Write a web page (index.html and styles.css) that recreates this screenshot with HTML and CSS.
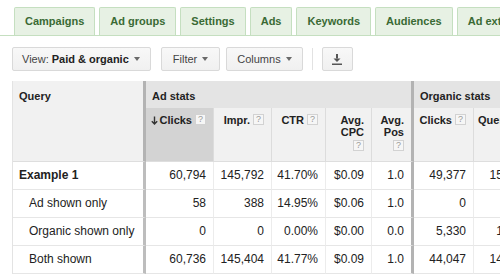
FILE: index.html
```html
<!DOCTYPE html>
<html>
<head>
<meta charset="utf-8">
<link rel="stylesheet" href="styles.css">
</head>
<body>
<div class="tabs">
  <div class="tab">Campaigns</div>
  <div class="tab">Ad groups</div>
  <div class="tab">Settings</div>
  <div class="tab">Ads</div>
  <div class="tab">Keywords</div>
  <div class="tab">Audiences</div>
  <div class="tab">Ad extensions</div>
</div>
<div class="toolbar">
  <div class="btn btn-view">View: <b>Paid &amp; organic</b><span class="caret"></span></div>
  <div class="btn btn-filter">Filter<span class="caret"></span></div>
  <div class="btn">Columns<span class="caret"></span></div>
  <div class="sep"></div>
  <div class="btn btn-dl"><svg width="10" height="11" viewBox="0 0 10 11"><rect x="4" y="0" width="2" height="4.5" fill="#555"/><polygon points="1.5,4.5 8.5,4.5 5,8" fill="#555"/><rect x="0" y="9.5" width="10" height="1.5" fill="#555"/></svg></div>
</div>
<div class="grid">
  <div class="hq">Query</div>
  <div class="hgroup">Ad stats</div>
  <div class="hgroup hgroup-org">Organic stats</div>

  <div class="hs sorted"><svg class="arrow" width="7" height="9" viewBox="0 0 7 9"><path d="M3.5 0.5V8M0.8 5.2L3.5 8L6.2 5.2" fill="none" stroke="#333" stroke-width="1.4"/></svg>Clicks<span class="help">?</span></div>
  <div class="hs">Impr.<span class="help">?</span></div>
  <div class="hs">CTR<span class="help">?</span></div>
  <div class="hs"><div>Avg.</div><div>CPC</div><div><span class="help">?</span></div></div>
  <div class="hs divr"><div>Avg.</div><div>Pos</div><div><span class="help">?</span></div></div>
  <div class="hs">Clicks<span class="help">?</span></div>
  <div class="hs">Queries<span class="help">?</span></div>

  <div class="q q-main">Example 1</div>
  <div class="c">60,794</div><div class="c">145,792</div><div class="c">41.70%</div><div class="c">$0.09</div><div class="c divr">1.0</div><div class="c">49,377</div><div class="c">151,230</div>

  <div class="q q-sub">Ad shown only</div>
  <div class="c">58</div><div class="c">388</div><div class="c">14.95%</div><div class="c">$0.06</div><div class="c divr">1.0</div><div class="c">0</div><div class="c">0</div>

  <div class="q q-sub">Organic shown only</div>
  <div class="c">0</div><div class="c">0</div><div class="c">0.00%</div><div class="c">$0.00</div><div class="c divr">0.0</div><div class="c">5,330</div><div class="c">16,288</div>

  <div class="q q-sub">Both shown</div>
  <div class="c">60,736</div><div class="c">145,404</div><div class="c">41.77%</div><div class="c">$0.09</div><div class="c divr">1.0</div><div class="c">44,047</div><div class="c">144,942</div>
</div>
</body>
</html>
```
FILE: styles.css
```css
html, body {
  margin: 0;
  padding: 0;
  overflow: hidden;
  background: #fff;
  font-family: "Liberation Sans", Arial, sans-serif;
  color: #222;
}

.tabs {
  display: flex;
  gap: 4px;
  padding: 7px 0 0 14px;
  border-bottom: 1px solid #c5dfc0;
  white-space: nowrap;
  overflow: hidden;
}

.tab {
  flex: none;
  height: 27px;
  line-height: 27px;
  padding: 0 10px;
  border: 1px solid #c5dfc0;
  border-bottom: none;
  border-radius: 2px 2px 0 0;
  background: #e7f1e4;
  color: #3a6a34;
  font-size: 11px;
  font-weight: bold;
}

.toolbar {
  display: flex;
  align-items: center;
  padding: 11px 12px 0;
}

.btn {
  box-sizing: border-box;
  height: 24px;
  display: flex;
  align-items: center;
  padding: 0 10px;
  border: 1px solid #d9d9d9;
  border-radius: 2px;
  background: linear-gradient(#f8f8f8, #f0f0f0);
  font-size: 11px;
  color: #444;
  white-space: pre;
  margin-right: 6px;
}

.btn b {
  color: #222;
}

.btn-view {
  padding: 0 10px 0 9px;
  margin-right: 10px;
}

.btn-filter {
  padding: 0 11px;
}

.caret {
  width: 0;
  height: 0;
  margin-left: 5px;
  border-left: 3px solid transparent;
  border-right: 3px solid transparent;
  border-top: 4px solid #6a6a6a;
}

.sep {
  width: 1px;
  height: 22px;
  background: #e2e2e2;
  margin: 0 9px 0 3px;
}

.btn-dl {
  width: 31px;
  justify-content: center;
  padding: 0;
}

.grid {
  display: grid;
  grid-template-columns: 133px 68px 58px 54px 46px 42px 60px 67px;
  width: max-content;
  margin: 10px 0 0 12px;
  border-left: 1px solid #e3e3e3;
}

.grid > div {
  box-sizing: border-box;
}

.hq {
  grid-row: span 2;
  background: #f1f1f1;
  border-right: 3px solid #b3b3b3;
  border-bottom: 1px solid #dedede;
  padding: 9px 6px 0;
  line-height: 13px;
  font-size: 11px;
  font-weight: bold;
}

.hgroup {
  grid-column: span 5;
  height: 27px;
  background: #e4e4e4;
  border-right: 3px solid #b3b3b3;
  padding: 9px 6px 0;
  line-height: 13px;
  font-size: 11px;
  font-weight: bold;
}

.hgroup-org {
  grid-column: span 2;
  border-right: none;
}

.hs {
  height: 54px;
  background: #f1f1f1;
  border-right: 1px solid #dcdcdc;
  border-bottom: 1px solid #dedede;
  padding: 6px 7px 0 3px;
  text-align: right;
  line-height: 12px;
  font-size: 11px;
  font-weight: bold;
  white-space: nowrap;
}

.hs.sorted {
  background: #d3d3d3;
}

.arrow {
  vertical-align: -1px;
  margin-right: 2px;
}

.help {
  display: inline-block;
  box-sizing: border-box;
  width: 11px;
  height: 11px;
  margin-left: 3px;
  border: 1px solid #d2d2d2;
  background: #f6f6f6;
  color: #9a9a9a;
  font-size: 9px;
  font-weight: normal;
  line-height: 9px;
  text-align: center;
  vertical-align: text-top;
}

.hs > div:last-child .help {
  margin-top: 2px;
}

.grid > .divr {
  border-right: 3px solid #b3b3b3;
}

.q, .c {
  height: 28px;
  line-height: 27px;
  font-size: 12px;
  border-bottom: 1px solid #e6e6e6;
  white-space: nowrap;
}

.q {
  border-right: 3px solid #bdbdbd;
  padding-left: 6px;
}

.q-main {
  font-weight: bold;
}

.q-sub {
  padding-left: 16px;
}

.c {
  text-align: right;
  padding-right: 7px;
  border-right: 1px solid #ececec;
}
```
